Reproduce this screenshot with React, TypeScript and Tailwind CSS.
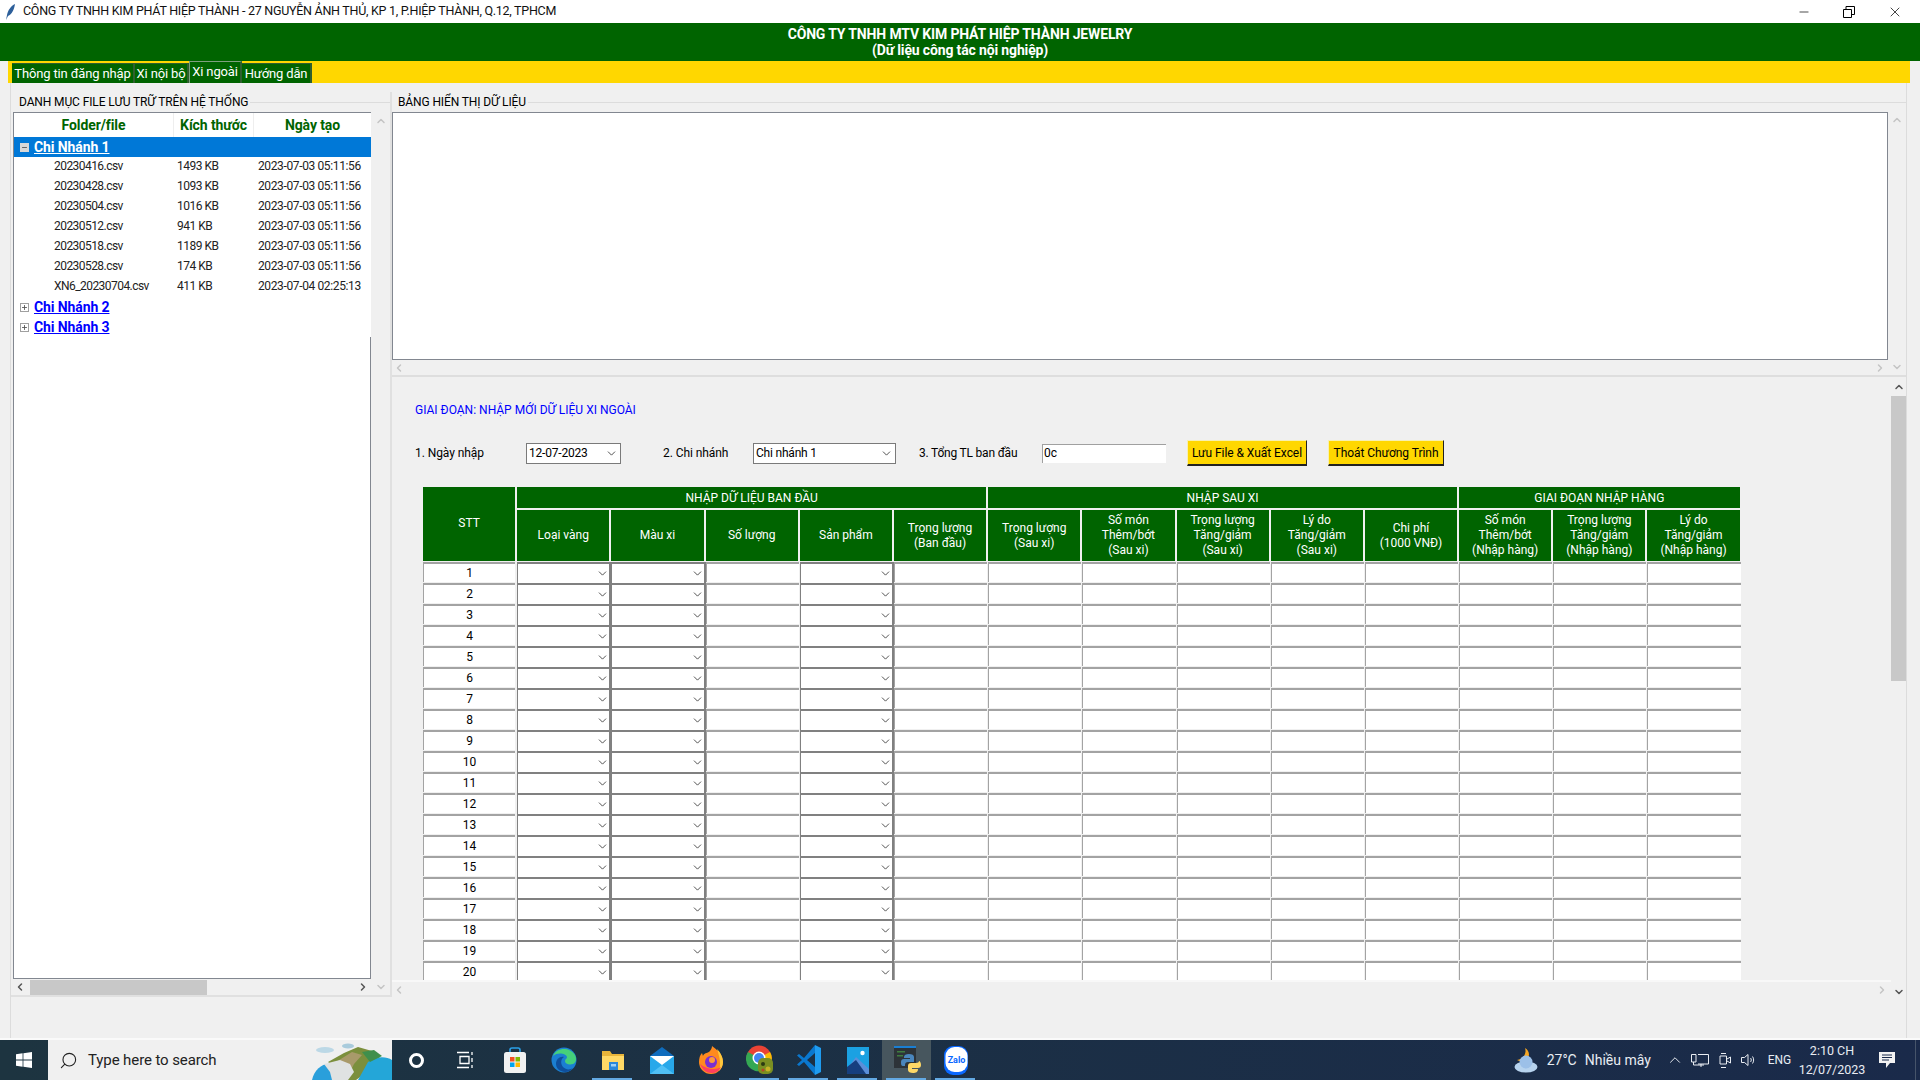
import React from 'react';
import { ChevronDown, ChevronUp, ChevronLeft, ChevronRight, Minus, X, Plus, Search } from 'lucide-react';

const FONT = 'font-[Roboto,"Noto_Sans",sans-serif]';

const FILES = [
  ['20230416.csv', '1493 KB', '2023-07-03 05:11:56'],
  ['20230428.csv', '1093 KB', '2023-07-03 05:11:56'],
  ['20230504.csv', '1016 KB', '2023-07-03 05:11:56'],
  ['20230512.csv', '941 KB', '2023-07-03 05:11:56'],
  ['20230518.csv', '1189 KB', '2023-07-03 05:11:56'],
  ['20230528.csv', '174 KB', '2023-07-03 05:11:56'],
  ['XN6_20230704.csv', '411 KB', '2023-07-04 02:25:13'],
];

const SUB_HEADERS = [
  ['Loại vàng'],
  ['Màu xi'],
  ['Số lượng'],
  ['Sản phẩm'],
  ['Trọng lượng', '(Ban đầu)'],
  ['Trọng lượng', '(Sau xi)'],
  ['Số món', 'Thêm/bớt', '(Sau xi)'],
  ['Trọng lượng', 'Tăng/giảm', '(Sau xi)'],
  ['Lý do', 'Tăng/giảm', '(Sau xi)'],
  ['Chi phí', '(1000 VNĐ)'],
  ['Số món', 'Thêm/bớt', '(Nhập hàng)'],
  ['Trọng lượng', 'Tăng/giảm', '(Nhập hàng)'],
  ['Lý do', 'Tăng/giảm', '(Nhập hàng)'],
];

const COMBO_COLS = [0, 1, 3];
const ROWS = Array.from({ length: 20 }, (_, i) => i + 1);

const ComboCell = () => (
  <div className="w-[94.2px] h-[21px] shrink-0 bg-white border-t-2 border-r-2 border-l border-[#808080] flex items-center justify-end">
    <ChevronDown size={13} strokeWidth={1.7} className="text-[#444]" />
  </div>
);

const EntryCell = () => (
  <div className="w-[94.2px] h-[21px] shrink-0 pr-[1px]">
    <div className="h-[20px] bg-white border-t-2 border-l border-[#a3a3a3]" />
  </div>
);

const TreeBranch = ({ name, open }: { name: string; open?: boolean }) => (
  <div className={`h-[20px] flex items-center pl-[6px] ${open ? 'bg-[#0078d7]' : ''}`}>
    <span className={`w-[9px] h-[9px] flex items-center justify-center border ${open ? 'bg-[#d8d8d8] border-[#d8d8d8]' : 'bg-white border-[#a0a0a0]'}`}>
      {open ? <Minus size={7} strokeWidth={3} className="text-[#555]" /> : <Plus size={7} strokeWidth={3} className="text-[#555]" />}
    </span>
    <span className={`ml-[5px] text-[14px] font-bold underline tracking-[-0.1px] ${open ? 'text-white' : 'text-[#0000ff]'}`}>{name}</span>
  </div>
);

const SmallCombo = ({ value, w }: { value: string; w: string }) => (
  <div className={`${w} h-[21px] shrink-0 bg-white border border-[#7a7a7a] flex items-center justify-between pl-[2px] pr-[2px]`}>
    <span className="tracking-[-0.2px]">{value}</span>
    <ChevronDown size={13} strokeWidth={1.7} className="text-[#444]" />
  </div>
);

const GoldButton = ({ label, w }: { label: string; w: string }) => (
  <button className={`${w} h-[26px] shrink-0 ml-[21px] bg-[#ffd700] border border-t-[#f7f0b0] border-l-[#f7f0b0] border-r-[#222] border-b-2 border-b-[#222] text-black text-[12px] tracking-[-0.05px] whitespace-nowrap`}>
    {label}
  </button>
);

const StartLogo = () => (
  <svg width="16" height="16" viewBox="0 0 16 16" fill="#fff"><path d="M0 2.2 6.6 1.3V7.6H0ZM7.4 1.2 16 0V7.6H7.4ZM0 8.4H6.6V14.7L0 13.8ZM7.4 8.4H16V16L7.4 14.8Z" /></svg>
);

const Landscape = () => (
  <svg width="82" height="40" viewBox="0 0 82 40">
    <ellipse cx="15" cy="10" rx="9" ry="3" fill="#bcd8e6" />
    <ellipse cx="38" cy="6" rx="6" ry="2.5" fill="#a9cbdc" />
    <path d="M2 40C4 30 12 24 18 24L30 30 34 40Z" fill="#2a9fdb" />
    <path d="M18 22 34 13 48 7 62 11 70 18 60 30 46 40H34L28 30Z" fill="#7b8f3c" />
    <path d="M26 22 42 12 52 15 44 24 38 36 30 30Z" fill="#a89a6a" />
    <path d="M14 24 30 20 40 24 44 32 38 40H22L20 32Z" fill="#dfe2e2" />
    <path d="M58 22C66 16 76 16 82 20V40H48Z" fill="#24a6d8" />
    <path d="M52 12 64 10 72 16 60 22Z" fill="#3f8f4c" />
  </svg>
);

const TaskIcon = ({ children, on, active }: { children: React.ReactNode; on?: boolean; active?: boolean }) => (
  <div className={`relative w-[49px] h-[40px] shrink-0 flex items-center justify-center ${active ? 'bg-[#47565e]' : ''}`}>
    {children}
    {on && <span className="absolute bottom-0 left-[4px] right-[5px] h-[2px] bg-[#63a9e3]" />}
  </div>
);

const StoreIcon = () => (
  <svg width="24" height="28" viewBox="0 0 24 28">
    <path d="M7 7V4a2 2 0 0 1 2-2h6a2 2 0 0 1 2 2v3" fill="none" stroke="#2aa0e8" strokeWidth="1.6" />
    <rect x="1" y="6" width="22" height="21" rx="2.5" fill="#f1f1f1" />
    <rect x="7" y="11" width="4.5" height="4.5" fill="#f25022" />
    <rect x="12.5" y="11" width="4.5" height="4.5" fill="#7fba00" />
    <rect x="7" y="16.5" width="4.5" height="4.5" fill="#00a4ef" />
    <rect x="12.5" y="16.5" width="4.5" height="4.5" fill="#ffb900" />
  </svg>
);

const EdgeIcon = () => (
  <svg width="26" height="26" viewBox="0 0 26 26">
    <circle cx="13" cy="13" r="12.5" fill="#1b7fd1" />
    <path d="M2 9C5 1 18-1 24 8c2 4 1 8-2 9-4 1-8 0-8-3 0-2 2-2 2-4C15 6 6 5 2 9Z" fill="#45d07b" />
    <path d="M5 17c0-5 4-8 8-7-3 2-4 6-1 10 3 3 7 3 10 1-3 4-8 5-12 3-3-1-5-4-5-7Z" fill="#0f4f9c" />
  </svg>
);

const FolderIcon = () => (
  <svg width="24" height="22" viewBox="0 0 24 22">
    <path d="M1 2h8l2 3h12v16H1Z" fill="#e8b53a" />
    <rect x="1" y="7" width="22" height="14" fill="#ffd966" />
    <rect x="8" y="13" width="9" height="8" fill="#2b88d8" />
    <rect x="10" y="15" width="5" height="2.5" fill="#9ed2f5" />
  </svg>
);

const MailIcon = () => (
  <svg width="24" height="27" viewBox="0 0 24 27">
    <path d="M12 0 24 9v18H0V9Z" fill="#0f6cbd" />
    <rect y="9" width="24" height="18" fill="#28a8ea" />
    <path d="M0 9h24l-12 9Z" fill="#fff" />
    <path d="M0 27 12 18l12 9Z" fill="#50c0f5" />
  </svg>
);

const FirefoxIcon = () => (
  <svg width="24" height="28" viewBox="0 0 24 28">
    <path d="M13 0c5 4 11 8 11 16a12 12 0 0 1-24 0c0-4 1-7 3-9l1 3c1-3 4-3 6-4 2-2 3-4 3-6Z" fill="#ff8a1e" />
    <path d="M18 3c3 3 6 8 6 13 0 4-2 7-4 9 2-6 1-13-2-22Z" fill="#ffc83d" />
    <path d="M1 18c2 5 6 9 11 9s8-2 10-6c-4 3-14 3-21-3Z" fill="#ff3f5e" />
    <circle cx="12" cy="16" r="6" fill="#7b2fd0" />
    <circle cx="13" cy="14" r="3" fill="#ff9a3c" />
  </svg>
);

const ChromeIcon = () => (
  <svg width="28" height="30" viewBox="0 0 28 30">
    <circle cx="13" cy="13" r="12.5" fill="#ea4335" />
    <path d="M13 13 24 7a12.5 12.5 0 0 1-7 18.5Z" fill="#fbbc05" />
    <path d="M13 13 17 25.5A12.5 12.5 0 0 1 2 7Z" fill="#34a853" />
    <circle cx="13" cy="13" r="6.5" fill="#fff" />
    <circle cx="13" cy="13" r="5" fill="#4285f4" />
    <rect x="12" y="13" width="15" height="16" rx="5" fill="#7a8f22" />
    <circle cx="17" cy="19" r="2" fill="#2b3a12" />
    <circle cx="22" cy="24" r="2.5" fill="#c6b227" />
    <circle cx="17" cy="25" r="1.5" fill="#b8432a" />
  </svg>
);

const VSCodeIcon = () => (
  <svg width="24" height="30" viewBox="0 0 24 30">
    <path d="M18 0 24 3V27L18 30Z" fill="#1f9cf0" />
    <path d="M18 0 7 13 2 9 0 10.5 5 15 0 19.5 2 21 7 17 18 30V22L10 15 18 8Z" fill="#0a78cf" />
  </svg>
);

const PhotosIcon = () => (
  <svg width="22" height="27" viewBox="0 0 22 27">
    <rect width="22" height="27" fill="#1ba1e2" />
    <circle cx="15.5" cy="6" r="2.2" fill="#fff" />
    <path d="M0 22 9 10 22 22V27H0Z" fill="#5b8fd9" />
    <path d="M0 27V20L9 13 19 27Z" fill="#163f7f" />
  </svg>
);

const PythonIcon = () => (
  <svg width="30" height="30" viewBox="0 0 30 30">
    <rect x="2" y="1" width="22" height="22" fill="#2d3338" />
    <rect x="2" y="1" width="22" height="2" fill="#1a7fd4" />
    <rect x="5" y="6" width="8" height="1.5" fill="#3f7d3f" />
    <rect x="5" y="10" width="6" height="1.5" fill="#3f7d3f" />
    <path d="M12 12c0-2 2-3 5-3s5 1 5 3v5h-6c-2 0-3 1-3 3v1h-2c-2 0-2-2-2-4s1-3 3-3h6v-1h-6Z" fill="#4a86bd" />
    <path d="M27 16c1 0 2 2 2 4s-1 3-3 3h-6v1h6c0 3-2 4-5 4s-5-1-5-3v-4c0-2 1-3 3-3h5c2 0 3-1 3-2Z" fill="#ffd866" />
  </svg>
);

const ZaloIcon = () => (
  <svg width="24" height="29" viewBox="0 0 24 29">
    <rect width="24" height="29" rx="9" fill="#0a68ff" />
    <rect x="1.5" y="1" width="22" height="25" rx="9" fill="#fff" />
    <text x="12.5" y="17" textAnchor="middle" fontSize="9" fontWeight="700" fontFamily="Roboto, sans-serif" fill="#0a68ff">Zalo</text>
  </svg>
);

const WeatherIcon = () => (
  <svg width="25" height="25" viewBox="0 0 25 25">
    <path d="M11 0a8 8 0 0 1 4 7 8 8 0 0 1-12 5 9 9 0 0 0 8-12Z" fill="#f5a623" />
    <ellipse cx="12" cy="19" rx="11.5" ry="5.5" fill="#b7d3ee" />
    <circle cx="12" cy="14" r="6.5" fill="#9cc0e8" />
  </svg>
);

const App: React.FC = () => {
  return (
    <div className={`w-[1920px] h-screen overflow-hidden flex flex-col bg-[#f0f0f0] text-black text-[12px] ${FONT}`}>
      {/* Title bar */}
      <div className="h-[23px] bg-white flex items-center shrink-0">
        <svg width="12" height="16" viewBox="0 0 12 16" className="ml-[5px]">
          <path d="M10 0C6 2 3 6 2 11L1 16 3 12C7 10 9 6 10 0Z" fill="#2d5f9a" />
        </svg>
        <span className="ml-[6px] text-[12.5px] tracking-[-0.27px] text-[#111]">CÔNG TY TNHH KIM PHÁT HIỆP THÀNH - 27 NGUYỄN ẢNH THỦ, KP 1, P.HIỆP THÀNH, Q.12, TPHCM</span>
        <div className="ml-auto flex items-center mr-[17px] gap-[32px]">
          <Minus size={14} strokeWidth={1.2} />
          <svg width="12" height="12" viewBox="0 0 12 12" fill="none" stroke="#000"><path d="M.5 3.5h8v8h-8ZM3 3V.5h8.500V8.500H9" /></svg>
          <X size={16} strokeWidth={1.1} />
        </div>
      </div>

      {/* Company header */}
      <div className="h-[38px] bg-[#006400] text-white font-bold text-[14px] leading-[16px] flex flex-col items-center justify-center shrink-0 tracking-[-0.15px]">
        <div>CÔNG TY TNHH MTV KIM PHÁT HIỆP THÀNH JEWELRY</div>
        <div>(Dữ liệu công tác nội nghiệp)</div>
      </div>

      {/* Tabs */}
      <div className="h-[22px] ml-[8px] w-[1902px] bg-[#ffd700] flex items-end pl-[4px] shrink-0 text-white text-[13px] tracking-[-0.15px]">
        <div className="w-[123px] h-[20px] bg-[#006400] border-t border-r-2 border-[#2f5f2f] flex items-center justify-center whitespace-nowrap">Thông tin đăng nhập</div>
        <div className="w-[54px] h-[20px] bg-[#006400] border-t border-r-2 border-[#2f5f2f] flex items-center justify-center whitespace-nowrap">Xi nội bộ</div>
        <div className="w-[53px] h-[22px] bg-[#006400] border-l border-t border-r-2 border-[#7fa07f] border-r-[#2f5f2f] flex items-start justify-center whitespace-nowrap">Xi ngoài</div>
        <div className="w-[70px] h-[20px] bg-[#006400] border-t border-r-2 border-[#2f5f2f] flex items-center justify-center whitespace-nowrap">Hướng dẫn</div>
      </div>

      {/* Main body */}
      <div className="flex-1 min-h-0 ml-[10px] mr-[13px] border-x border-[#dcdcdc] flex pt-[9px]">
        {/* Left panel */}
        <div className="w-[381px] h-[905px] shrink-0 flex flex-col border-b-2 border-r-2 border-[#e0e0e0]">
          <div className="h-[20px] flex items-center shrink-0">
            <span className="ml-[8px] mr-[2px] tracking-[-0.12px] whitespace-nowrap">DANH MỤC FILE LƯU TRỮ TRÊN HỆ THỐNG</span>
            <div className="flex-1 h-[1px] bg-[#dcdcdc]" />
          </div>
          <div className="flex h-[867px] shrink-0">
            <div className="ml-[2px] w-[358px] h-[867px] bg-white border-l border-t border-b border-[#828790] flex flex-col">
              <div className="h-[24px] shrink-0 flex items-center text-[#006400] font-bold text-[14px] text-center tracking-[-0.1px]">
                <div className="w-[160px] border-r border-[#eee] leading-[24px]">Folder/file</div>
                <div className="w-[80px] border-r border-[#eee] leading-[24px] whitespace-nowrap">Kích thước</div>
                <div className="flex-1 leading-[24px]">Ngày tạo</div>
              </div>
              <TreeBranch name="Chi Nhánh 1" open />
              {FILES.map(f => (
                <div key={f[0]} className="h-[20px] flex items-center pb-[2px] tracking-[-0.37px] whitespace-nowrap text-[#222]">
                  <span className="w-[163px] pl-[40px] tracking-[-0.55px]">{f[0]}</span>
                  <span className="w-[81px] tracking-[-0.5px]">{f[1]}</span>
                  <span>{f[2]}</span>
                </div>
              ))}
              <TreeBranch name="Chi Nhánh 2" />
              <TreeBranch name="Chi Nhánh 3" />
              <div className="flex-1 border-r border-[#828790]" />
            </div>
            <div className="flex-1 flex flex-col items-center justify-between pt-[3px] pb-[3px] text-[#c4c4c4]">
              <ChevronUp size={12} strokeWidth={3} />
            </div>
          </div>
          <div className="flex-1 flex">
            <div className="ml-[3px] w-[357px] flex items-center justify-between text-[#555] relative">
              <ChevronLeft size={12} strokeWidth={3} />
              <div className="absolute left-[16px] top-[1px] w-[177px] h-[15px] bg-[#c8c8c8]" />
              <ChevronRight size={12} strokeWidth={3} className="mr-[2px]" />
            </div>
            <div className="flex-1 flex items-center justify-center text-[#c4c4c4]">
              <ChevronDown size={12} strokeWidth={3} />
            </div>
          </div>
        </div>

        {/* Right panel */}
        <div className="w-[1516px] h-[955px] flex flex-col relative">
          <div className="h-[20px] flex items-center shrink-0">
            <span className="ml-[6px] mr-[2px] tracking-[-0.12px] whitespace-nowrap">BẢNG HIỂN THỊ DỮ LIỆU</span>
            <div className="flex-1 h-[1px] bg-[#dcdcdc]" />
          </div>

          {/* Data viewer */}
          <div className="h-[265px] shrink-0 flex border-b-2 border-[#dedede]">
            <div className="w-[1496px] shrink-0 flex flex-col">
              <div className="h-[248px] shrink-0 bg-white border border-[#828790]" />
              <div className="flex-1 flex items-center justify-between pl-[1px] pr-[2px] text-[#c4c4c4]">
                <ChevronLeft size={12} strokeWidth={3} />
                <ChevronRight size={12} strokeWidth={3} />
              </div>
            </div>
            <div className="flex-1 flex flex-col items-center justify-between py-[2px] text-[#c4c4c4]">
              <ChevronUp size={12} strokeWidth={3} />
              <ChevronDown size={12} strokeWidth={3} />
            </div>
          </div>

          {/* Entry form */}
          <div className="flex-1 min-h-0 flex">
            <div className="w-[1499px] shrink-0 flex flex-col">
              <div className="h-[605px] shrink-0 overflow-hidden border-b-2 border-[#f8f8f8]">
                <div className="mt-[25px] pl-[23px] h-[16px] leading-[16px] text-[#0000ff] tracking-[0px]">GIAI ĐOẠN: NHẬP MỚI DỮ LIỆU XI NGOÀI</div>
                <div className="mt-[22px] pl-[23px] h-[26px] flex items-center tracking-[-0.08px] whitespace-nowrap">
                  <span className="w-[111px] shrink-0">1. Ngày nhập</span>
                  <SmallCombo value="12-07-2023" w="w-[95px]" />
                  <span className="ml-[42px] w-[90px] shrink-0">2. Chi nhánh</span>
                  <SmallCombo value="Chi nhánh 1" w="w-[143px]" />
                  <span className="ml-[23px] w-[123px] shrink-0 tracking-[-0.2px]">3. Tổng TL ban đầu</span>
                  <div className="w-[124px] h-[19px] shrink-0 bg-white border-t border-l border-[#a0a0a0] pl-[1px] leading-[17px]">0c</div>
                  <GoldButton label="Lưu File & Xuất Excel" w="w-[120px]" />
                  <GoldButton label="Thoát Chương Trình" w="w-[116px]" />
                </div>

                {/* Input table */}
                <div className="mt-[21px] ml-[31px] w-[1320px]">
                  <div className="grid grid-cols-[repeat(14,92.2px)] grid-rows-[21px_51px] gap-[2px] text-white text-center">
                    <div className="row-span-2 bg-[#006400] flex items-center justify-center pb-[2px]">STT</div>
                    <div className="col-span-5 bg-[#006400] flex items-center justify-center">NHẬP DỮ LIỆU BAN ĐẦU</div>
                    <div className="col-span-5 bg-[#006400] flex items-center justify-center">NHẬP SAU XI</div>
                    <div className="col-span-3 bg-[#006400] flex items-center justify-center">GIAI ĐOẠN NHẬP HÀNG</div>
                    {SUB_HEADERS.map((lines, i) => (
                      <div key={i} className="bg-[#006400] flex flex-col items-center justify-center leading-[15px] whitespace-nowrap">
                        {lines.map(l => <div key={l}>{l}</div>)}
                      </div>
                    ))}
                  </div>
                  <div className="mt-[1px]">
                    {ROWS.map(n => (
                      <div key={n} className="flex h-[21px]">
                        <div className="w-[94.2px] shrink-0 pr-[2px]">
                          <div className="h-[20px] bg-white border-t-2 border-l border-[#a3a3a3] text-center leading-[18px] text-[12px]">{n}</div>
                        </div>
                        {SUB_HEADERS.map((_, c) => (COMBO_COLS.includes(c) ? <ComboCell key={c} /> : <EntryCell key={c} />))}
                      </div>
                    ))}
                  </div>
                </div>
              </div>
              <div className="h-[16px] flex items-center justify-between pl-[1px] pr-[3px] text-[#c4c4c4]">
                <ChevronLeft size={12} strokeWidth={3} />
                <ChevronRight size={12} strokeWidth={3} />
              </div>
            </div>
            <div className="w-[15px] h-[621px] shrink-0 flex flex-col items-center bg-[#f0f0f0] text-[#555]">
              <div className="h-[19px] flex items-center justify-center"><ChevronUp size={12} strokeWidth={3} /></div>
              <div className="w-full h-[285px] bg-[#c8c8c8]" />
              <div className="mt-auto"><ChevronDown size={12} strokeWidth={3} /></div>
            </div>
          </div>
        </div>
      </div>

      {/* Windows taskbar */}
      <div className="h-[42px] pt-[2px] bg-[#fafafa] shrink-0">
        <div className="h-[40px] flex items-center bg-linear-to-r from-[#1d3440] to-[#1a2a4a] text-white">
          <div className="w-[48px] h-[40px] shrink-0 flex items-center justify-center"><StartLogo /></div>
          <div className="w-[344px] h-[40px] shrink-0 bg-[#f0f0f0] flex items-center text-[#222] relative overflow-hidden">
            <Search size={19} strokeWidth={1.4} className="ml-[11px] -scale-x-100" />
            <span className="ml-[10px] text-[15px] tracking-[-0.1px]">Type here to search</span>
            <div className="absolute right-0 top-0"><Landscape /></div>
          </div>
          <TaskIcon><span className="w-[15px] h-[15px] rounded-full border-[3px] border-white" /></TaskIcon>
          <TaskIcon>
            <svg width="17" height="18" viewBox="0 0 17 18" fill="none" stroke="#fff" strokeWidth="1.3"><path d="M0 1.500H12M3 5.500H12V12.500H3ZM0 16.500H12M15 1V4M15 7V11M15 14V17" /></svg>
          </TaskIcon>
          <TaskIcon><StoreIcon /></TaskIcon>
          <TaskIcon><EdgeIcon /></TaskIcon>
          <TaskIcon on><FolderIcon /></TaskIcon>
          <TaskIcon><MailIcon /></TaskIcon>
          <TaskIcon><FirefoxIcon /></TaskIcon>
          <TaskIcon on><ChromeIcon /></TaskIcon>
          <TaskIcon on><VSCodeIcon /></TaskIcon>
          <TaskIcon on><PhotosIcon /></TaskIcon>
          <TaskIcon on active><PythonIcon /></TaskIcon>
          <TaskIcon on><ZaloIcon /></TaskIcon>

          <div className="ml-auto flex items-center h-[40px] text-[#e8ecf2] whitespace-nowrap">
            <WeatherIcon />
            <span className="ml-[8px] text-[14px]">27°C</span>
            <span className="ml-[8px] text-[14px] w-[70px]">Nhiều mây</span>
            <ChevronUp size={18} strokeWidth={1.3} className="ml-[11px]" />
            <svg width="18" height="15" viewBox="0 0 18 15" fill="none" stroke="#e8ecf2" className="ml-[7px]"><path d="M.5 1.500H5V9H.5ZM7 1.500H17.500V11H7M2.500 9V12H13M10 11V14" /></svg>
            <svg width="12" height="17" viewBox="0 0 12 17" fill="none" stroke="#e8ecf2" className="ml-[10px]"><path d="M2 1.500H7M2 15.500H7M1 4H7.500V12H1ZM8 7 11.500 5V11L8 9" /></svg>
            <svg width="15" height="14" viewBox="0 0 15 14" fill="none" stroke="#e8ecf2" className="ml-[10px]"><path d="M.5 4.500H3.500L7 1.500V12.500L3.500 9.500H.5ZM9.500 5C10.500 6 10.500 8 9.500 9M11.500 3.500C13 5.500 13 8.500 11.500 10.500" /></svg>
            <span className="ml-[12px] text-[12px] tracking-[-0.1px]">ENG</span>
            <div className="ml-[3px] w-[76px] text-center text-[12.500px] leading-[19px]">
              <div>2:10 CH</div>
              <div>12/07/2023</div>
            </div>
            <svg width="17" height="17" viewBox="0 0 17 17" className="ml-[9px]"><path d="M0 0H16V11H11L7 16V11H0Z" fill="#f3f3f3" /><path d="M3 3H13M3 5.500H13M3 8H10" stroke="#1a2a4a" strokeWidth="1" /></svg>
            <div className="ml-[19px] mr-[4px] w-[1px] h-[40px] bg-[#46546a]" />
          </div>
        </div>
      </div>
    </div>
  );
};

export default App;
